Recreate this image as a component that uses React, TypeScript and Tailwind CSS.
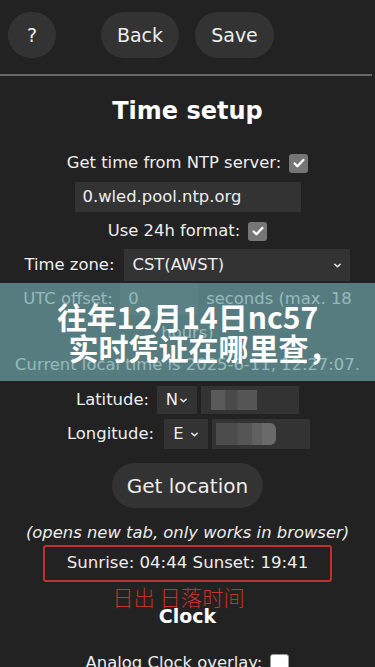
import React from 'react';

function Check({ on }: { on: boolean }) {
  return (
    <span
      className={
        on
          ? 'inline-flex h-[19px] w-[19px] items-center justify-center rounded-[3px] bg-[#767676] align-middle'
          : 'inline-flex h-[19px] w-[19px] items-center justify-center rounded-[3px] border border-[#999] bg-white align-middle'
      }
    >
      {on && (
        <svg viewBox="0 0 16 16" className="h-[14px] w-[14px]">
          <path d="M3 8.5l3.2 3.2L13 4.5" fill="none" stroke="#fff" strokeWidth="2.6" strokeLinecap="round" strokeLinejoin="round" />
        </svg>
      )}
    </span>
  );
}

function Chevron() {
  return (
    <svg viewBox="0 0 10 10" className="h-[9px] w-[9px]">
      <path d="M2 3.5l3 3 3-3" fill="none" stroke="#eee" strokeWidth="1.6" strokeLinecap="round" strokeLinejoin="round" />
    </svg>
  );
}

export default function App() {
  return (
    <div className="relative h-[667px] overflow-hidden bg-[#222] text-[#eee] font-['DejaVu_Sans',Verdana,sans-serif]">
      <div className="flex gap-4 px-2 pt-3 pb-4">
        <button className="h-[46px] w-[48px] rounded-full bg-[#333] text-[19px]">?</button>
        <div className="w-[13px]" />
        <button className="h-[46px] w-[78px] rounded-full bg-[#333] text-[19px]">Back</button>
        <button className="h-[46px] w-[79px] rounded-full bg-[#333] text-[19px]">Save</button>
      </div>
      <div className="mr-[3px] h-[2px] bg-[#666]" />

      <h2 className="mt-[17px] text-center text-[24px] font-bold leading-[36px] text-white">Time setup</h2>

      <div className="mt-[19px] flex flex-col items-center text-[16.4px]">
        <div className="flex h-[30px] items-center gap-2">
          <span>Get time from NTP server:</span>
          <Check on />
        </div>
        <div className="mt-[4px] flex h-[30px] w-[226px] items-center bg-[#333] px-[8px]">0.wled.pool.ntp.org</div>
        <div className="mt-[4px] flex h-[30px] items-center gap-2">
          <span>Use 24h format:</span>
          <Check on />
        </div>
        <div className="mt-[3px] flex items-center gap-[10px]">
          <span>Time zone:</span>
          <div className="flex h-[32px] w-[226px] items-center justify-between bg-[#333] px-[8px]">
            <span>CST(AWST)</span>
            <Chevron />
          </div>
        </div>
        <div className="mt-[2px] flex h-[32px] items-center">
          <span className="w-[97px]">UTC offset:</span>
          <div className="flex h-[32px] w-[78px] items-center bg-[#333] px-[8px]">0</div>
          <span className="pl-[8px]">seconds (max. 18</span>
        </div>
        <div className="mt-[1px] flex h-[34px] items-center">hours)</div>
        <div className="flex h-[30px] items-center">Current local time is 2025-6-11, 12:27:07.</div>
        <div className="mt-[6px] flex h-[28px] items-center">
          <span>Latitude:</span>
          <div className="ml-[8px] flex h-[28px] w-[40px] items-center justify-center gap-[1px] bg-[#333]">
            <span>N</span>
            <Chevron />
          </div>
          <div className="ml-[4px] h-[28px] w-[98px] bg-[#333] p-[4px]">
            <div className="ml-[6px] flex h-full w-[50px]">
              <div className="h-full w-[14px] bg-[#5a5a5a]" />
              <div className="h-full w-[12px] bg-[#4a4a4a]" />
              <div className="h-full w-[20px] bg-[#555]" />
            </div>
          </div>
        </div>
        <div className="mt-[5px] flex h-[30px] items-center pl-[2px]">
          <span>Longitude:</span>
          <div className="ml-[10px] flex h-[30px] w-[44px] items-center justify-center gap-[6px] bg-[#333]">
            <span>E</span>
            <Chevron />
          </div>
          <div className="ml-[4px] h-[30px] w-[98px] bg-[#333] p-[4px]">
            <div className="flex h-full w-[60px] overflow-hidden rounded-r-[6px]">
              <div className="h-full w-[22px] bg-[#4c4c4c]" />
              <div className="h-full w-[14px] bg-[#555]" />
              <div className="h-full w-[10px] bg-[#606060]" />
              <div className="h-full w-[14px] bg-[#6a6a6a]" />
            </div>
          </div>
        </div>
        <button className="mt-[14px] h-[45px] w-[151px] rounded-full bg-[#333] text-[20px]">Get location</button>
        <div className="mt-[13px] italic leading-[24px]">(opens new tab, only works in browser)</div>
        <div className="flex h-[37px] w-[289px] items-center justify-center rounded-[3px] border-2 border-[#c0302c] text-[16.6px]">
          Sunrise: 04:44 Sunset: 19:41
        </div>
        <div className="mt-[2px] pr-[18px] text-[21.3px] font-light leading-[26px] text-[#c3332e] font-['Noto_Sans_CJK_SC',sans-serif]">日出 日落时间</div>
        <div className="-mt-[6px] text-[19px] font-bold leading-[24px] text-white">Clock</div>
        <div className="mt-[22px] flex h-[26px] items-center gap-2">
          <span>Analog Clock overlay:</span>
          <Check on={false} />
        </div>
      </div>

      <div className="absolute left-0 right-0 top-[283px] flex h-[98px] flex-col items-center justify-center bg-[#6ea3a7]/70 text-[30px] font-bold leading-[31px] text-white font-['Noto_Sans_CJK_SC',sans-serif]">
        <div>往年12月14日nc57</div>
        <div className="pl-[32px]">实时凭证在哪里查，</div>
      </div>
    </div>
  );
}
